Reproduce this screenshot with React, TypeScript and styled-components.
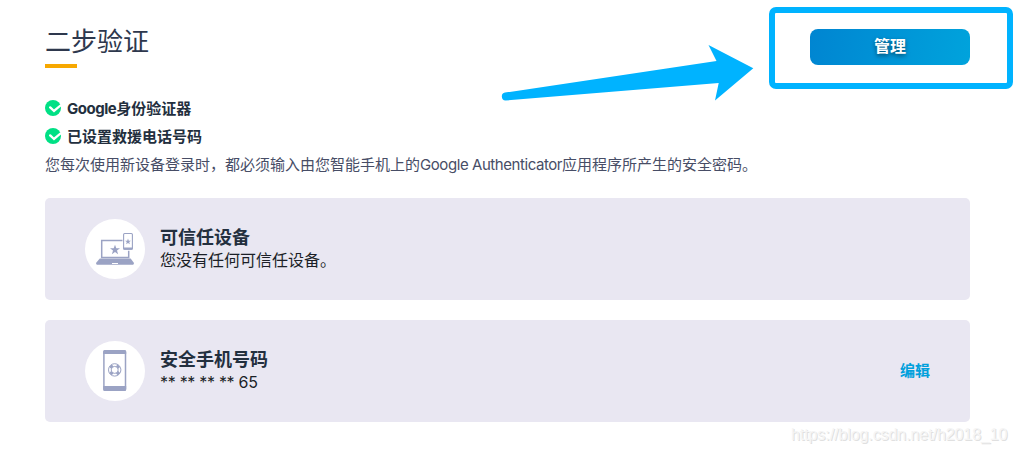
import * as React from "react";
import styled, { createGlobalStyle } from "styled-components";

let GlobalStyle=createGlobalStyle`
    *{
        box-sizing:border-box;
    }
    body{
        margin:0;
        background-color:#fff;
        font-family:"Noto Sans CJK SC", sans-serif;
        color:#232f3e;
        overflow:hidden;
    }
`;
let Page=styled.main`
    position:relative;
    width:1017px;
    height:453px;
    padding:20px 47px 0 45px;
`;
let Header=styled.header`
    display:flex;
    justify-content:space-between;
    height:48px;
`;
let Title=styled.h1`
    display:flex;
    flex-direction:column;
    justify-content:space-between;
    margin:0;
    font-size:26px;
    font-weight:400;
    line-height:40px;
    color:#2e384d;
    &::after {
        content:"";
        width:32px;
        height:4px;
        background-color:#f7a800;
    }
`;
let ManageButton=styled.button`
    width:160px;
    height:36px;
    margin-top:9px;
    padding:0 0 4px;
    border:none;
    border-radius:8px;
    background:linear-gradient(100deg, #0085d1, #00a3dc);
    color:#fff;
    font-family:inherit;
    font-size:16px;
    font-weight:700;
    text-shadow:0 2px 4px rgba(0,0,0,.5);
    cursor:pointer;
`;
let Checks=styled.ul`
    margin:26px 0 0;
    padding:0;
    list-style:none;
`;
let CheckRow=styled.li`
    display:flex;
    align-items:center;
    gap:6px;
    height:28px;
    font-size:15px;
    font-weight:700;
    line-height:28px;
`;
let Latin=styled.span<{$spacing: number}>`
    font-family:"Inter", sans-serif;
    letter-spacing:${(p) => p.$spacing}px;
`;
let Note=styled.p`
    margin:0 0 20px;
    font-size:15px;
    line-height:28px;
    height:28px;
    white-space:nowrap;
    color:#474d66;
`;
let Cards=styled.section`
    display:grid;
    gap:20px;
`;
let Card=styled.article`
    display:flex;
    align-items:center;
    height:102px;
    padding:0 40px;
    border-radius:5px;
    background-color:#e9e7f2;
`;
let IconCircle=styled.div`
    width:60px;
    height:60px;
    margin-right:15px;
    border-radius:50%;
    background-color:#fff;
`;
let CardText=styled.div`
    flex:1;
    padding-bottom:3px;
`;
let CardTitle=styled.h2`
    margin:0;
    font-size:18px;
    font-weight:700;
    line-height:23px;
`;
let CardValue=styled.div`
    font-size:16px;
    line-height:22px;
    color:#1b1f27;
`;
let EditLink=styled.a`
    padding-bottom:4px;
    font-size:15px;
    font-weight:700;
    color:#00a0dc;
    cursor:pointer;
`;
let Frame=styled.div`
    position:absolute;
    left:769px;
    top:7px;
    width:244px;
    height:82px;
    border:6px solid #00b3ff;
    border-radius:7px;
    pointer-events:none;
`;
let Arrow=styled.svg`
    position:absolute;
    left:494px;
    top:40px;
    fill:#00b3ff;
`;
let Watermark=styled.div`
    position:absolute;
    left:791px;
    top:426px;
    font-family:"Liberation Sans", sans-serif;
    font-size:16px;
    line-height:18px;
    letter-spacing:-.08px;
    white-space:nowrap;
    color:#f5f5f5;
    text-shadow:1px 1px 0 #e0e0e0;
`;

let star="M0 -5 L1.3 -1.5 H5 L2 0.8 L3.1 4.4 L0 2.2 L-3.1 4.4 L-2 0.8 L-5 -1.5 H-1.3 Z";

let CheckIcon = () => (
    <svg width="16" height="16" viewBox="0 0 16 16">
        <circle cx="8" cy="8" r="8" fill="#00e085"/>
        <path d="M5.2 7.4 L9 11 L15.4 5.6" fill="none" stroke="#fff" strokeWidth="2.3" strokeLinecap="round"/>
    </svg>
)
let DevicesIcon = () => (
    <svg width="60" height="60" viewBox="0 0 60 60" fill="#9ba3c4">
        <path d="M16.7 21.6 H43.7 V38.5 H16.7 Z" fill="#fff" stroke="#9ba3c4" strokeWidth="1.5"/>
        <path d="M14.8 39.6 H45.6 L48.8 43.8 Q49.4 45.8 47 45.8 H13 Q10.6 45.8 11.2 43.8 Z"/>
        <rect x="27" y="44" width="6" height="1" fill="#fff"/>
        <path d={star} transform="translate(30 30.8)"/>
        <rect x="37.5" y="13.3" width="11" height="18.4" rx="1.5" fill="#fff"/>
        <rect x="38.6" y="14.5" width="8.8" height="15.6" rx="1" fill="#fff" stroke="#9ba3c4" strokeWidth="1.1"/>
        <rect x="38.1" y="28.4" width="9.8" height="2.3" rx="1"/>
        <path d={star} transform="translate(43 22.6) scale(.6)"/>
    </svg>
)
let PhoneIcon = () => (
    <svg width="60" height="60" viewBox="0 0 60 60" fill="#9ba3c4">
        <rect x="18.9" y="9.7" width="21.6" height="39.6" rx="1.6" fill="#fff" stroke="#9ba3c4" strokeWidth="1.5"/>
        <path d="M18.2 13 V10.5 Q18.2 9 19.7 9 H39.7 Q41.2 9 41.2 10.5 V13 Z"/>
        <path d="M18.2 45 H41.2 V48.5 Q41.2 50 39.7 50 H19.7 Q18.2 50 18.2 48.5 Z"/>
        <g fill="none" stroke="#9ba3c4">
            <circle cx="29.7" cy="28.9" r="6.2" strokeWidth="1"/>
            <circle cx="29.7" cy="28.9" r="3.5" strokeWidth="1"/>
            <path d="M25.5 24.7 L27.3 26.5 M33.9 24.7 L32.1 26.5 M25.5 33.1 L27.3 31.3 M33.9 33.1 L32.1 31.3" strokeWidth="3.4"/>
        </g>
    </svg>
)

type cardProps = {
    icon: React.ReactNode,
    title: string,
    value: React.ReactNode,
    action?: string
}
let InfoCard = (props: cardProps) => {
    return (
        <Card>
            <IconCircle>{props.icon}</IconCircle>
            <CardText>
                <CardTitle>{props.title}</CardTitle>
                <CardValue>{props.value}</CardValue>
            </CardText>
            {props.action && <EditLink>{props.action}</EditLink>}
        </Card>
    )
}

let App = () => {
    return (
        <Page>
            <GlobalStyle/>
            <Header>
                <Title>二步验证</Title>
                <ManageButton>管理</ManageButton>
            </Header>
            <Checks>
                <CheckRow><CheckIcon/><div><Latin $spacing={-0.5}>Google</Latin>身份验证器</div></CheckRow>
                <CheckRow><CheckIcon/>已设置救援电话号码</CheckRow>
            </Checks>
            <Note>您每次使用新设备登录时，都必须输入由您智能手机上的<Latin $spacing={-0.43}>Google Authenticator</Latin>应用程序所产生的安全密码。</Note>
            <Cards>
                <InfoCard icon={<DevicesIcon/>} title="可信任设备" value="您没有任何可信任设备。"/>
                <InfoCard icon={<PhoneIcon/>} title="安全手机号码" value={<Latin $spacing={-0.3}>** ** ** ** 65</Latin>} action="编辑"/>
            </Cards>
            <Frame/>
            <Arrow width="262" height="64" viewBox="0 0 262 64">
                <path d="M11 52.6 L222.5 21 L214.5 5 L259.3 28.3 L221 60.5 L224.7 43 L11.5 60.5 A4 4 0 0 1 11 52.6 Z"/>
            </Arrow>
            <Watermark>https://blog.csdn.net/h2018_10</Watermark>
        </Page>
    )
}

export default App;
